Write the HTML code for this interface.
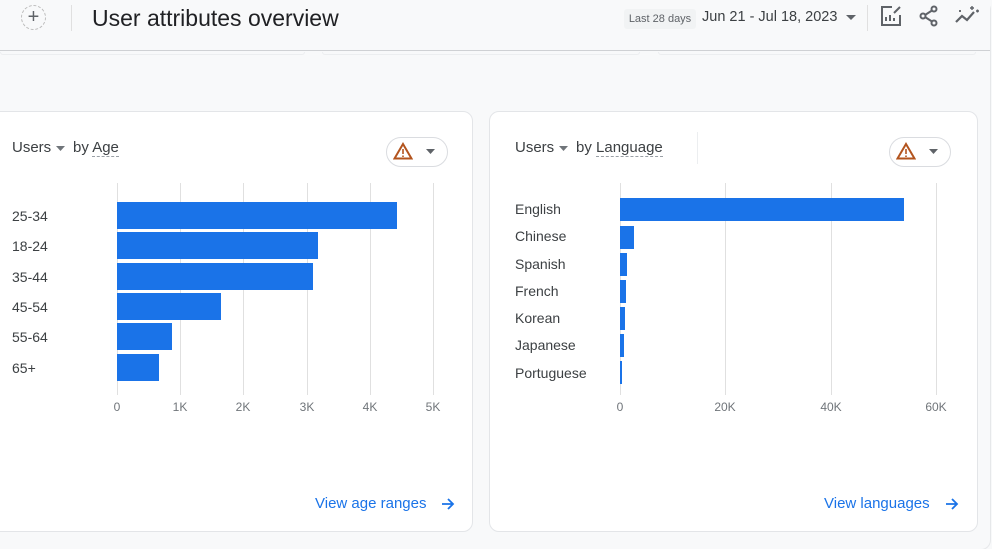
<!DOCTYPE html>
<html><head><meta charset="utf-8">
<style>
*{box-sizing:border-box;margin:0;padding:0}
body{width:992px;height:552px;overflow:hidden;background:#f8f9fa;font-family:"Liberation Sans",Arial,sans-serif;position:relative;color:#3c4043}
.abs{position:absolute}
.card{position:absolute;background:#fff;border:1px solid #e3e5e8;border-radius:10px}
.t{position:absolute;font-size:14px;color:#3c4043;white-space:nowrap}
.ax{position:absolute;font-size:12px;color:#70757a;transform:translateX(-50%)}
.bar{position:absolute;background:#1a73e8}
.grid{position:absolute;width:1px;background:#e0e0e0}
.link{position:absolute;font-size:15px;color:#1a73e8;white-space:nowrap}
.pill{position:absolute;width:62px;height:30px;border:1px solid #dadce0;border-radius:15px;background:#fff}
</style></head><body>
<div class="abs" style="left:0;top:0;width:991px;height:550px;border:1px solid #e6e8ea;border-left:none;border-radius:0 10px 10px 0"></div>
<!-- header -->
<div class="abs" style="left:0;top:0;width:990px;height:51px;background:#f8f9fa;border-bottom:1px solid #cfd1d4"></div>
<div class="abs" style="left:21px;top:5px;width:25px;height:25px;border:1px dashed #bbb;border-radius:50%;font-size:20px;line-height:22px;text-align:center;color:#5f6368">+</div>
<div class="abs" style="left:71px;top:5px;width:1px;height:26px;background:#e0e0e0"></div>
<div class="t" style="left:92px;top:5px;font-size:23px;color:#202124">User attributes overview</div>
<div class="abs" style="left:624px;top:9px;width:72px;height:20px;background:#f1f3f4;border-radius:3px;font-size:11px;line-height:20px;text-align:center;color:#5f6368">Last 28 days</div>
<div class="t" style="left:702px;top:9px;font-size:14.5px;color:#3c4043">Jun 21 - Jul 18, 2023</div>
<svg class="abs" style="left:846px;top:15px" width="10" height="6"><path d="M0 0h10L5 5z" fill="#5f6368"/></svg>
<div class="abs" style="left:867px;top:5px;width:1px;height:26px;background:#e0e0e0"></div>
<svg class="abs" style="left:880px;top:5px" width="22" height="22" viewBox="0 0 22 22" fill="none" stroke="#5f6368" stroke-width="2"><path d="M12 2H2v18h18V10"/><path d="M6 16v-4M10 16v-6M14 16v-3"/><path d="M14 8l6-6" /></svg>
<svg class="abs" style="left:918px;top:5px" width="22" height="22" viewBox="0 0 22 22" fill="none" stroke="#5f6368" stroke-width="2"><circle cx="16" cy="4" r="2.5"/><circle cx="5" cy="11" r="2.5"/><circle cx="16" cy="18" r="2.5"/><path d="M7 10l7-4.5M7 12l7 4.5"/></svg>
<svg class="abs" style="left:954px;top:5px" width="26" height="22" viewBox="0 0 26 22" fill="none" stroke="#5f6368" stroke-width="2.2"><path d="M2 17l6-6 5 4 7-8"/><path d="M16 3h4M18 1v4M22 6h3M23.5 4.5v3M5 6h2M6 5v2" stroke-width="1.4"/></svg>
<div class="abs" style="left:0;top:52px;width:305px;height:3px;border:1px solid #eceef0;border-top:none;border-radius:0 0 6px 6px"></div>
<div class="abs" style="left:322px;top:52px;width:318px;height:3px;border:1px solid #eceef0;border-top:none;border-radius:0 0 6px 6px"></div>
<div class="abs" style="left:658px;top:52px;width:318px;height:3px;border:1px solid #eceef0;border-top:none;border-radius:0 0 6px 6px"></div>

<!-- left card -->
<div class="card" style="left:-10px;top:111px;width:483px;height:421px"></div>
<div class="t" style="left:12px;top:139px;font-size:15px">Users</div>
<svg class="abs" style="left:56px;top:146px" width="9" height="5"><path d="M0 0h9L4.5 5z" fill="#70757a"/></svg>
<div class="t" style="left:73px;top:139px;font-size:15px">by <span style="border-bottom:1px dashed #9aa0a6">Age</span></div>
<div class="pill" style="left:386px;top:137px"></div>
<svg class="abs" style="left:393px;top:142px" width="20" height="18" viewBox="0 0 20 18"><path d="M10 2L18.5 16.5H1.5Z" fill="none" stroke="#b3541e" stroke-width="2"/><path d="M10 7v5M10 13.5v1.5" stroke="#b3541e" stroke-width="1.6"/></svg>
<svg class="abs" style="left:426px;top:149px" width="9" height="5"><path d="M0 0h9L4.5 5z" fill="#5f6368"/></svg>

<div class="grid" style="left:117px;top:183px;height:212px"></div>
<div class="grid" style="left:180px;top:183px;height:212px"></div>
<div class="grid" style="left:243px;top:183px;height:212px"></div>
<div class="grid" style="left:307px;top:183px;height:212px"></div>
<div class="grid" style="left:370px;top:183px;height:212px"></div>
<div class="grid" style="left:433px;top:183px;height:212px"></div>
<div class="bar" style="left:117px;top:202px;width:280px;height:27px"></div>
<div class="bar" style="left:117px;top:232px;width:201px;height:27px"></div>
<div class="bar" style="left:117px;top:263px;width:196px;height:27px"></div>
<div class="bar" style="left:117px;top:293px;width:104px;height:27px"></div>
<div class="bar" style="left:117px;top:323px;width:55px;height:27px"></div>
<div class="bar" style="left:117px;top:354px;width:42px;height:27px"></div>
<div class="t" style="left:12px;top:208px">25-34</div>
<div class="t" style="left:12px;top:238px">18-24</div>
<div class="t" style="left:12px;top:269px">35-44</div>
<div class="t" style="left:12px;top:299px">45-54</div>
<div class="t" style="left:12px;top:329px">55-64</div>
<div class="t" style="left:12px;top:360px">65+</div>
<div class="ax" style="left:117px;top:400px">0</div>
<div class="ax" style="left:180px;top:400px">1K</div>
<div class="ax" style="left:243px;top:400px">2K</div>
<div class="ax" style="left:307px;top:400px">3K</div>
<div class="ax" style="left:370px;top:400px">4K</div>
<div class="ax" style="left:433px;top:400px">5K</div>
<div class="link" style="left:315px;top:495px">View age ranges</div>
<svg class="abs" style="left:441px;top:497px" width="14" height="14" viewBox="0 0 14 14" fill="none" stroke="#1a73e8" stroke-width="1.8"><path d="M1 7h11M7 2l5 5-5 5"/></svg>

<!-- right card -->
<div class="card" style="left:489px;top:111px;width:489px;height:421px"></div>
<div class="t" style="left:515px;top:139px;font-size:15px">Users</div>
<svg class="abs" style="left:559px;top:146px" width="9" height="5"><path d="M0 0h9L4.5 5z" fill="#70757a"/></svg>
<div class="t" style="left:576px;top:139px;font-size:15px">by <span style="border-bottom:1px dashed #9aa0a6">Language</span></div>
<div class="abs" style="left:697px;top:132px;width:1px;height:32px;background:#eceef0"></div>
<div class="pill" style="left:889px;top:137px"></div>
<svg class="abs" style="left:896px;top:142px" width="20" height="18" viewBox="0 0 20 18"><path d="M10 2L18.5 16.5H1.5Z" fill="none" stroke="#b3541e" stroke-width="2"/><path d="M10 7v5M10 13.5v1.5" stroke="#b3541e" stroke-width="1.6"/></svg>
<svg class="abs" style="left:929px;top:149px" width="9" height="5"><path d="M0 0h9L4.5 5z" fill="#5f6368"/></svg>

<div class="grid" style="left:620px;top:183px;height:212px"></div>
<div class="grid" style="left:725px;top:183px;height:212px"></div>
<div class="grid" style="left:831px;top:183px;height:212px"></div>
<div class="grid" style="left:936px;top:183px;height:212px"></div>
<div class="bar" style="left:620px;top:198px;width:284px;height:23px"></div>
<div class="bar" style="left:620px;top:226px;width:14px;height:23px"></div>
<div class="bar" style="left:620px;top:253px;width:7px;height:23px"></div>
<div class="bar" style="left:620px;top:280px;width:6px;height:23px"></div>
<div class="bar" style="left:620px;top:307px;width:5px;height:23px"></div>
<div class="bar" style="left:620px;top:334px;width:4px;height:23px"></div>
<div class="bar" style="left:620px;top:361px;width:2px;height:23px"></div>
<div class="t" style="left:515px;top:201px">English</div>
<div class="t" style="left:515px;top:228px">Chinese</div>
<div class="t" style="left:515px;top:256px">Spanish</div>
<div class="t" style="left:515px;top:283px">French</div>
<div class="t" style="left:515px;top:310px">Korean</div>
<div class="t" style="left:515px;top:337px">Japanese</div>
<div class="t" style="left:515px;top:365px">Portuguese</div>
<div class="ax" style="left:620px;top:400px">0</div>
<div class="ax" style="left:725px;top:400px">20K</div>
<div class="ax" style="left:831px;top:400px">40K</div>
<div class="ax" style="left:936px;top:400px">60K</div>
<div class="link" style="left:824px;top:495px">View languages</div>
<svg class="abs" style="left:945px;top:497px" width="14" height="14" viewBox="0 0 14 14" fill="none" stroke="#1a73e8" stroke-width="1.8"><path d="M1 7h11M7 2l5 5-5 5"/></svg>

<div class="abs" style="left:0;top:549px;width:992px;height:3px;background:#fff"></div>
</body></html>
